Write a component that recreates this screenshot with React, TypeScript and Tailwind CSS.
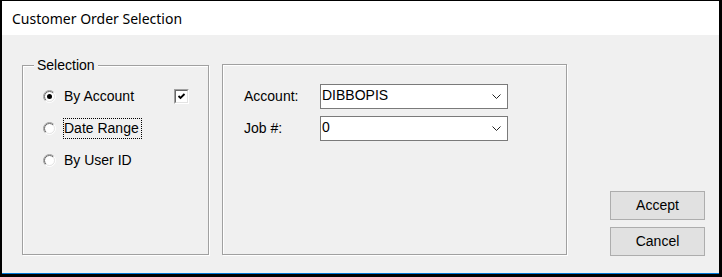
import React from "react";

function Radio({ checked = false }: { checked?: boolean }) {
  return (
    <svg width="13" height="13" viewBox="0 0 13 13" className="shrink-0">
      <defs>
        <linearGradient id="radioOuter" x1="0" y1="0" x2="1" y2="1">
          <stop offset="0.45" stopColor="#a0a0a0" />
          <stop offset="0.55" stopColor="#ffffff" />
        </linearGradient>
        <linearGradient id="radioInner" x1="0" y1="0" x2="1" y2="1">
          <stop offset="0.45" stopColor="#696969" />
          <stop offset="0.55" stopColor="#e3e3e3" />
        </linearGradient>
      </defs>
      <circle cx="6.5" cy="6.5" r="6" fill="none" stroke="url(#radioOuter)" strokeWidth="1" />
      <circle cx="6.5" cy="6.5" r="5" fill="#ffffff" stroke="url(#radioInner)" strokeWidth="1" />
      {checked && <circle cx="6.5" cy="6.5" r="2.5" fill="#000000" />}
    </svg>
  );
}

function Checkbox() {
  return (
    <div className="w-[15px] h-[15px] -mr-[1px] border border-t-[#a0a0a0] border-l-[#a0a0a0] border-r-white border-b-white">
      <div className="w-full h-full bg-white border border-t-[#696969] border-l-[#696969] border-r-[#e3e3e3] border-b-[#e3e3e3] flex items-center justify-center">
        <svg width="9" height="9" viewBox="0 0 9 9">
          <path d="M1.5 4 L3.5 6 L7.5 2" fill="none" stroke="#000" strokeWidth="1.8" />
        </svg>
      </div>
    </div>
  );
}

function Combo({ value }: { value: string }) {
  return (
    <div className="w-[188px] h-[25px] bg-white border border-[#7a7a7a] flex items-start justify-between pl-[1px] pr-[6px] pt-[2px]">
      <span className="leading-[16px]">{value}</span>
      <svg width="9" height="6" viewBox="0 0 9 6" className="mt-[7px]">
        <path d="M0.5 0.5 L4.5 4.5 L8.5 0.5" fill="none" stroke="#222" strokeWidth="1" />
      </svg>
    </div>
  );
}

function RadioRow({
  label,
  checked,
  focused,
  children,
}: {
  label: string;
  checked?: boolean;
  focused?: boolean;
  children?: React.ReactNode;
}) {
  return (
    <div className="flex items-center h-[20px] pr-[20px]">
      <Radio checked={checked} />
      <span
        className={
          "ml-[7px] h-[21px] flex items-center pr-[2px] border " +
          (focused ? "border-dotted border-black" : "border-transparent")
        }
      >
        {label}
      </span>
      {children && <div className="ml-auto">{children}</div>}
    </div>
  );
}

function GroupBox({
  className,
  children,
}: {
  className?: string;
  children: React.ReactNode;
}) {
  return (
    <div
      className={
        "relative border border-[#a0a0a0] shadow-[inset_1px_1px_0_#ffffff,1px_1px_0_#ffffff] " +
        (className ?? "")
      }
    >
      {children}
    </div>
  );
}

export default function App() {
  return (
    <div
      className="w-[722px] h-[277px] bg-black pt-[1px] pl-[2px] pr-[3px] pb-[3px] flex flex-col text-[14px] text-black"
      style={{ fontFamily: '"Liberation Sans", Arial, sans-serif' }}
    >
      <div
        className="h-[34px] bg-white flex items-center pl-[10px] text-[14px] shrink-0"
        style={{ fontFamily: '"Segoe UI", "Noto Sans", sans-serif' }}
      >
        Customer Order Selection
      </div>
      <div className="flex-1 bg-[#f0f0f0] border-b border-[#0078d7] flex pl-[20px] pt-[29px]">
        <GroupBox className="w-[187px] h-[190px] mt-[1px]">
          <span className="absolute left-[11px] -top-[9px] px-[3px] bg-[#f0f0f0] leading-[16px]">
            Selection
          </span>
          <div className="flex flex-col gap-[12px] pt-[20px] pl-[20px]">
            <RadioRow label="By Account" checked>
              <Checkbox />
            </RadioRow>
            <RadioRow label="Date Range" focused />
            <RadioRow label="By User ID" />
          </div>
        </GroupBox>
        <GroupBox className="w-[345px] h-[191px] ml-[13px]">
          <div className="flex flex-col gap-[7px] pt-[19px] pl-[21px]">
            <div className="flex items-center">
              <span className="w-[76px]">Account:</span>
              <Combo value="DIBBOPIS" />
            </div>
            <div className="flex items-center">
              <span className="w-[76px]">Job #:</span>
              <Combo value="0" />
            </div>
          </div>
        </GroupBox>
        <div className="ml-auto mr-[14px] mb-[17px] self-end flex flex-col gap-[7px]">
          <button className="w-[95px] h-[29px] bg-[#e1e1e1] border border-[#adadad] text-[14px]">
            Accept
          </button>
          <button className="w-[95px] h-[29px] bg-[#e1e1e1] border border-[#adadad] text-[14px]">
            Cancel
          </button>
        </div>
      </div>
    </div>
  );
}
